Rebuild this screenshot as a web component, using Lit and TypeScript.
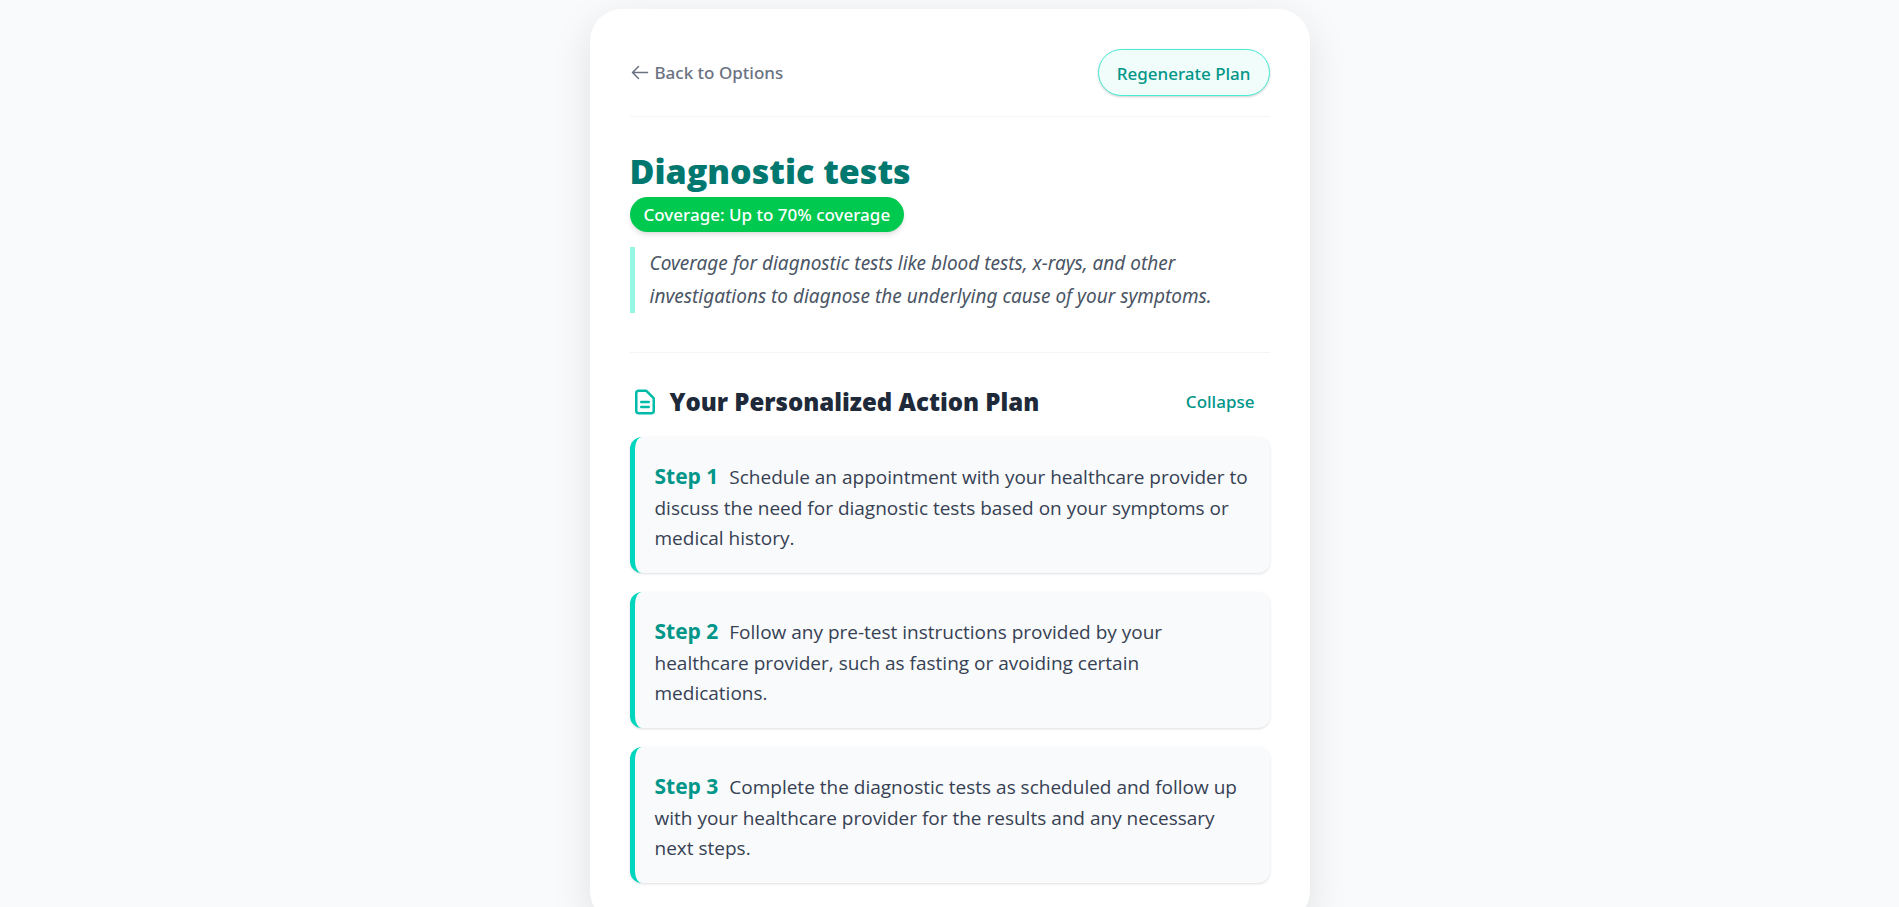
import { LitElement, html, css } from "lit";
import { customElement, state } from "lit/decorators.js";

const STEPS: string[] = [
  "Schedule an appointment with your healthcare provider to discuss the need for diagnostic tests based on your symptoms or medical history.",
  "Follow any pre-test instructions provided by your healthcare provider, such as fasting or avoiding certain medications.",
  "Complete the diagnostic tests as scheduled and follow up with your healthcare provider for the results and any necessary next steps.",
];

@customElement("app-root")
export class AppRoot extends LitElement {
  @state() private expanded = true;

  static styles = css`
    :host {
      display: block;
      box-sizing: border-box;
      min-height: 100vh;
      padding: 9px 16px;
      background: #f9fafb;
      color: #364153;
      font-family: "Segoe UI", "Open Sans", "Noto Sans", sans-serif;
      font-size: 19px;
      line-height: 30px;
    }
    * {
      box-sizing: border-box;
    }
    h1,
    h2,
    p,
    ol {
      margin: 0;
      padding: 0;
    }
    button {
      font: inherit;
      cursor: pointer;
    }
    .card {
      max-width: 720px;
      margin: 0 auto;
      padding: 40px;
      border-radius: 32px;
      background: #fff;
      box-shadow: 0 12px 40px rgba(0, 0, 0, 0.1);
    }
    .toolbar {
      display: flex;
      align-items: center;
      justify-content: space-between;
      padding-bottom: 20px;
      border-bottom: 1px solid #f3f4f6;
    }
    .back,
    .regenerate,
    .badge,
    .toggle {
      font-family: "Segoe UI", "Noto Sans", sans-serif;
      font-size: 17px;
      font-weight: 500;
    }
    .back {
      display: flex;
      align-items: center;
      gap: 5px;
      padding: 0;
      border: 0;
      background: none;
      color: #6a7282;
    }
    .back svg {
      width: 20px;
      height: 20px;
    }
    .regenerate {
      height: 47px;
      padding: 2px 18px 0;
      border: 1px solid #46ecd5;
      border-radius: 24px;
      background: #f0fdfa;
      color: #009689;
      box-shadow: 0 1px 3px rgba(0, 0, 0, 0.1), 0 1px 2px rgba(0, 0, 0, 0.1);
    }
    .intro {
      display: flex;
      flex-direction: column;
      align-items: flex-start;
      padding: 31px 0 39px;
      border-bottom: 1px solid #f3f4f6;
    }
    h1 {
      color: #00786f;
      font-size: 34px;
      font-weight: 800;
      line-height: 46px;
    }
    .badge {
      margin-top: 3px;
      padding: 1px 14px 0;
      border-radius: 18px;
      background: #00c950;
      color: #fff;
      line-height: 34px;
      box-shadow: 0 4px 6px -1px rgba(0, 0, 0, 0.1), 0 2px 4px -2px rgba(0, 0, 0, 0.1);
    }
    .summary {
      margin-top: 15px;
      padding-left: 15px;
      border-left: 5px solid #96f7e4;
      color: #4a5565;
      font-family: "Segoe UI", "Noto Sans", sans-serif;
      font-style: italic;
      line-height: 33px;
    }
    .plan-head {
      display: flex;
      align-items: center;
      justify-content: space-between;
      padding: 32px 0 19px;
    }
    .plan-title {
      display: flex;
      align-items: center;
      gap: 10px;
    }
    .plan-title svg {
      width: 30px;
      height: 30px;
      color: #00bba7;
    }
    h2 {
      color: #1e2939;
      font-size: 24px;
      font-weight: 800;
      line-height: 33px;
    }
    .toggle {
      padding: 0 15px;
      border: 0;
      background: none;
      color: #009689;
    }
    .steps {
      display: grid;
      gap: 19px;
      list-style: none;
    }
    .step {
      padding: 22px 20px 20px;
      border-left: 5px solid #00d5be;
      border-radius: 12px;
      background: #f9fafb;
      box-shadow: 0 1px 3px rgba(0, 0, 0, 0.1), 0 1px 2px -1px rgba(0, 0, 0, 0.1);
    }
    .step-label {
      margin-right: 6px;
      color: #009689;
      font-size: 21px;
      font-weight: 700;
      line-height: 34px;
    }
  `;

  private toggle() {
    this.expanded = !this.expanded;
  }

  render() {
    return html`
      <main class="card">
        <div class="toolbar">
          <button class="back" type="button">
            <svg viewBox="0 0 20 20" fill="none" stroke="currentColor" stroke-width="1.5" stroke-linecap="round" stroke-linejoin="round" aria-hidden="true">
              <path d="M17.5 9.5H2.5M8.5 3.5 2.5 9.5 8.5 15.5" />
            </svg>
            Back to Options
          </button>
          <button class="regenerate" type="button">Regenerate Plan</button>
        </div>

        <section class="intro">
          <h1>Diagnostic tests</h1>
          <span class="badge">Coverage: Up to 70% coverage</span>
          <p class="summary">
            Coverage for diagnostic tests like blood tests, x-rays, and other
            investigations to diagnose the underlying cause of your symptoms.
          </p>
        </section>

        <section>
          <div class="plan-head">
            <div class="plan-title">
              <svg viewBox="0 0 24 24" fill="none" stroke="currentColor" stroke-width="2" stroke-linecap="round" stroke-linejoin="round" aria-hidden="true">
                <path d="M9 12h6m-6 4h6m2 5H7a2 2 0 01-2-2V5a2 2 0 012-2h5.586a1 1 0 01.707.293l5.414 5.414a1 1 0 01.293.707V19a2 2 0 01-2 2z" />
              </svg>
              <h2>Your Personalized Action Plan</h2>
            </div>
            <button class="toggle" type="button" aria-expanded=${this.expanded} @click=${this.toggle}>
              ${this.expanded ? "Collapse" : "Expand"}
            </button>
          </div>
          ${this.expanded
            ? html`<ol class="steps">
                ${STEPS.map(
                  (text, i) => html`<li class="step"><span class="step-label">Step ${i + 1}</span> ${text}</li>`
                )}
              </ol>`
            : null}
        </section>
      </main>
    `;
  }
}
